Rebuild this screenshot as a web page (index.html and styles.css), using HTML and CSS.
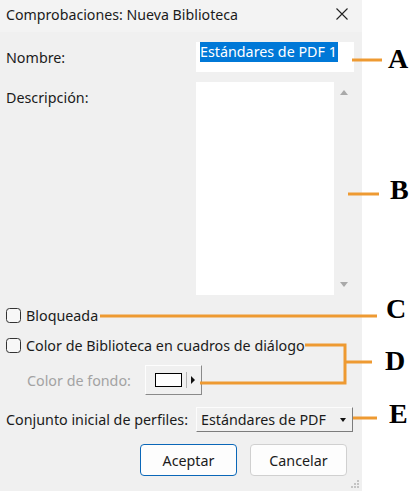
FILE: index.html
```html
<!DOCTYPE html>
<html lang="es">
<head>
<meta charset="utf-8">
<title>Comprobaciones: Nueva Biblioteca</title>
<link rel="stylesheet" href="styles.css">
</head>
<body>
<div class="page">
  <div class="dialog">
    <div class="titlebar">
      <span class="title">Comprobaciones: Nueva Biblioteca</span>
      <svg class="close" width="12" height="12" viewBox="0 0 12 12"><path d="M0.5 0.5L11.5 11.5M11.5 0.5L0.5 11.5" stroke="#222" stroke-width="1.1" fill="none"/></svg>
    </div>
    <div class="content">
      <div class="field-row name-row">
        <span class="label">Nombre:</span>
        <div class="input"><span class="selected">Estándares de PDF 1</span></div>
      </div>
      <div class="field-row desc-row">
        <span class="label desc-label">Descripción:</span>
        <div class="desc-box">
          <div class="textarea"></div>
          <div class="scroll">
            <span class="arrow-up"></span>
            <span class="arrow-down"></span>
          </div>
        </div>
      </div>
      <div class="check-row">
        <span class="checkbox"></span>
        <span>Bloqueada</span>
      </div>
      <div class="check-row">
        <span class="checkbox"></span>
        <span>Color de Biblioteca en cuadros de diálogo</span>
      </div>
      <div class="fondo-row">
        <span class="muted">Color de fondo:</span>
        <div class="color-btn">
          <span class="swatch"></span>
          <span class="sep"></span>
          <span class="tri-right"></span>
        </div>
      </div>
      <div class="field-row perf-row">
        <span class="label">Conjunto inicial de perfiles:</span>
        <div class="select">
          <span>Estándares de PDF</span>
          <span class="tri-down"></span>
        </div>
      </div>
      <div class="buttons">
        <button class="btn btn-primary">Aceptar</button>
        <button class="btn">Cancelar</button>
      </div>
      <div class="grip-row">
        <svg class="grip" width="10" height="10" viewBox="0 0 10 10">
          <rect x="7" y="1" width="2" height="2" fill="#c4c4c4"/>
          <rect x="4" y="4" width="2" height="2" fill="#c4c4c4"/>
          <rect x="7" y="4" width="2" height="2" fill="#c4c4c4"/>
          <rect x="1" y="7" width="2" height="2" fill="#c4c4c4"/>
          <rect x="4" y="7" width="2" height="2" fill="#c4c4c4"/>
          <rect x="7" y="7" width="2" height="2" fill="#c4c4c4"/>
        </svg>
      </div>
    </div>
  </div>
  <div class="side"></div>

  <svg class="callouts" width="417" height="491" viewBox="0 0 417 491">
    <g stroke="#ee9a32" stroke-width="3" fill="none">
      <path d="M352 60H382"/>
      <path d="M348 194H379"/>
      <path d="M100 316H377"/>
      <path d="M305 345H345V383H200M345 362H372"/>
      <path d="M353 418H377"/>
    </g>
  </svg>
  <span class="tag tag-a">A</span>
  <span class="tag tag-b">B</span>
  <span class="tag tag-c">C</span>
  <span class="tag tag-d">D</span>
  <span class="tag tag-e">E</span>
</div>
</body>
</html>
```

FILE: styles.css
```css
* { box-sizing: border-box; }
html, body {
  margin: 0;
  padding: 0;
  background: #ffffff;
}
body {
  font-family: "Noto Sans", "Open Sans", sans-serif;
  font-size: 14.3px;
  color: #1b1b1b;
}
.page {
  position: relative;
  width: 417px;
  height: 491px;
  display: flex;
}
.dialog {
  width: 362px;
  height: 491px;
  background: #f0f0f0;
  display: flex;
  flex-direction: column;
}
.side {
  flex: 1;
  background: #ffffff;
}
.titlebar {
  height: 32px;
  background: #f3f3f3;
  display: flex;
  align-items: center;
  justify-content: space-between;
  padding: 0 14px 4px 6px;
}
.title {
  font-size: 14.2px;
}
.content {
  flex: 1;
  display: flex;
  flex-direction: column;
  padding: 10px 0 0 6px;
}
.field-row {
  display: grid;
  grid-template-columns: 190px auto;
  align-items: center;
}
.name-row {
  height: 30px;
}
.input {
  width: 158px;
  height: 30px;
  background: #ffffff;
  padding: 0 0 0 4px;
  display: flex;
  align-items: flex-start;
}
.selected {
  background: #0078d7;
  color: #ffffff;
  line-height: 20px;
  padding-right: 1px;
}
.desc-row {
  margin-top: 10px;
  align-items: start;
}
.desc-label {
  padding-top: 6px;
}
.desc-box {
  display: flex;
  height: 213px;
}
.textarea {
  width: 138px;
  height: 213px;
  background: #ffffff;
}
.scroll {
  width: 17px;
  display: flex;
  flex-direction: column;
  justify-content: space-between;
  align-items: center;
  padding: 8px 0 8px 2px;
}
.arrow-up {
  width: 0;
  height: 0;
  border-left: 4px solid transparent;
  border-right: 4px solid transparent;
  border-bottom: 5px solid #a9a9a9;
}
.arrow-down {
  width: 0;
  height: 0;
  border-left: 4px solid transparent;
  border-right: 4px solid transparent;
  border-top: 5px solid #a9a9a9;
}
.check-row {
  display: flex;
  align-items: center;
  gap: 5px;
  height: 20px;
  margin-top: 10px;
}
.checkbox {
  width: 15px;
  height: 15px;
  border: 1px solid #333333;
  border-radius: 3.5px;
  background: #f7f7f7;
}
.fondo-row {
  display: flex;
  align-items: center;
  gap: 14px;
  height: 30px;
  margin-top: 10px;
  padding-left: 21px;
}
.muted {
  color: #a3a3a3;
}
.color-btn {
  width: 57px;
  height: 30px;
  display: flex;
  align-items: center;
  padding-left: 9px;
  background: #f0f0f0;
  border-top: 1px solid #fdfdfd;
  border-left: 1px solid #fdfdfd;
  border-right: 1px solid #8a8a8a;
  border-bottom: 1px solid #8a8a8a;
}
.swatch {
  width: 27px;
  height: 14px;
  border: 1px solid #000000;
  background: #ffffff;
}
.sep {
  width: 1px;
  height: 16px;
  background: #b5b5b5;
  margin-left: 4px;
}
.tri-right {
  width: 0;
  height: 0;
  border-top: 4px solid transparent;
  border-bottom: 4px solid transparent;
  border-left: 4px solid #111111;
  margin-left: 4px;
}
.perf-row {
  margin-top: 12px;
  height: 25px;
}
.select {
  width: 157px;
  height: 25px;
  display: flex;
  align-items: center;
  justify-content: space-between;
  padding: 0 6px 0 4px;
  background: #f0f0f0;
  border-top: 1px solid #fcfcfc;
  border-left: 1px solid #fcfcfc;
  border-right: 1px solid #7c7c7c;
  border-bottom: 1px solid #7c7c7c;
}
.tri-down {
  width: 0;
  height: 0;
  border-left: 3px solid transparent;
  border-right: 3px solid transparent;
  border-top: 4px solid #111111;
}
.buttons {
  display: flex;
  justify-content: flex-end;
  gap: 13px;
  margin-top: 12px;
  padding-right: 15px;
}
.btn {
  width: 97px;
  height: 32px;
  font-family: inherit;
  font-size: 14.3px;
  color: #1b1b1b;
  background: #fdfdfd;
  border: 1px solid #d0d0d0;
  border-radius: 4px;
  padding: 0;
}
.btn-primary {
  border-color: #0a67b8;
}
.grip-row {
  display: flex;
  justify-content: flex-end;
  padding: 3px 2px 0 0;
}
.callouts {
  position: absolute;
  left: 0;
  top: 0;
  pointer-events: none;
}
.tag {
  position: absolute;
  font-family: "Liberation Serif", "Times New Roman", serif;
  font-weight: bold;
  font-size: 28px;
  line-height: 28px;
  color: #000000;
}
.tag-a { left: 388px; top: 45px; }
.tag-b { left: 390px; top: 176px; }
.tag-c { left: 386px; top: 295px; }
.tag-d { left: 385px; top: 347px; }
.tag-e { left: 389px; top: 400px; }
```
